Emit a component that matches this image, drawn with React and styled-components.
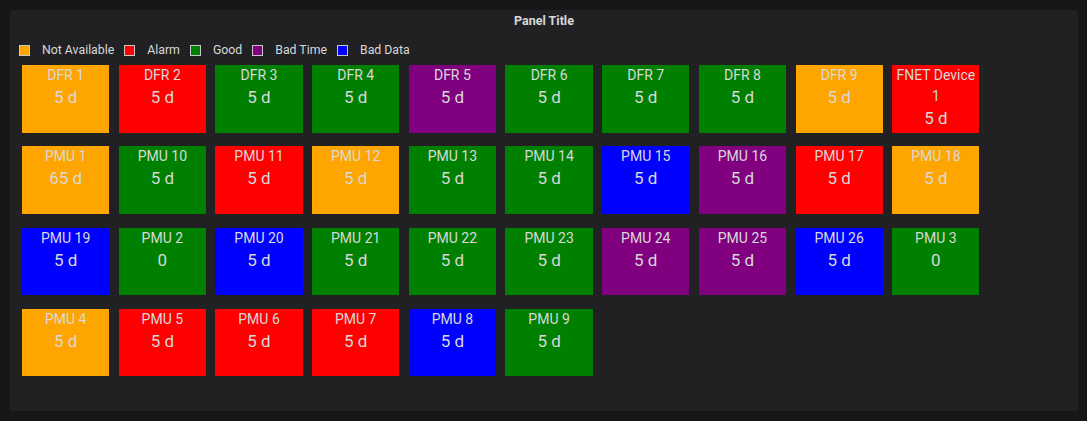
import React from 'react'
import styled, { createGlobalStyle } from 'styled-components'

const COLORS = {
    na: '#ffa500',
    alarm: '#ff0000',
    good: '#008000',
    badTime: '#800080',
    badData: '#0000ff',
}

const legend = [
    { key: 'na', label: 'Not Available' },
    { key: 'alarm', label: 'Alarm' },
    { key: 'good', label: 'Good' },
    { key: 'badTime', label: 'Bad Time' },
    { key: 'badData', label: 'Bad Data' },
]

// device name, status, uptime
const devices = [
    ['DFR 1', 'na', '5 d'],
    ['DFR 2', 'alarm', '5 d'],
    ['DFR 3', 'good', '5 d'],
    ['DFR 4', 'good', '5 d'],
    ['DFR 5', 'badTime', '5 d'],
    ['DFR 6', 'good', '5 d'],
    ['DFR 7', 'good', '5 d'],
    ['DFR 8', 'good', '5 d'],
    ['DFR 9', 'na', '5 d'],
    ['FNET Device 1', 'alarm', '5 d'],
    ['PMU 1', 'na', '65 d'],
    ['PMU 10', 'good', '5 d'],
    ['PMU 11', 'alarm', '5 d'],
    ['PMU 12', 'na', '5 d'],
    ['PMU 13', 'good', '5 d'],
    ['PMU 14', 'good', '5 d'],
    ['PMU 15', 'badData', '5 d'],
    ['PMU 16', 'badTime', '5 d'],
    ['PMU 17', 'alarm', '5 d'],
    ['PMU 18', 'na', '5 d'],
    ['PMU 19', 'badData', '5 d'],
    ['PMU 2', 'good', '0'],
    ['PMU 20', 'badData', '5 d'],
    ['PMU 21', 'good', '5 d'],
    ['PMU 22', 'good', '5 d'],
    ['PMU 23', 'good', '5 d'],
    ['PMU 24', 'badTime', '5 d'],
    ['PMU 25', 'badTime', '5 d'],
    ['PMU 26', 'badData', '5 d'],
    ['PMU 3', 'good', '0'],
    ['PMU 4', 'na', '5 d'],
    ['PMU 5', 'alarm', '5 d'],
    ['PMU 6', 'alarm', '5 d'],
    ['PMU 7', 'alarm', '5 d'],
    ['PMU 8', 'badData', '5 d'],
    ['PMU 9', 'good', '5 d'],
]

function App() {
    return (
        <>
            <GlobalStyle />
            <Panel>
                <Header>Panel Title</Header>
                <Legend>
                    {legend.map((item) => (
                        <LegendItem key={item.key}>
                            <Swatch $color={COLORS[item.key]} />
                            {item.label}
                        </LegendItem>
                    ))}
                </Legend>
                <Grid>
                    {devices.map(([name, status, value]) => (
                        <Tile key={name} $color={COLORS[status]}>
                            <Name>{name}</Name>
                            <Value>{value}</Value>
                        </Tile>
                    ))}
                </Grid>
            </Panel>
        </>
    )
}

const GlobalStyle = createGlobalStyle`
    body {
        margin: 0;
        padding: 10px;
        background: #161719;
        font-family: Roboto, "Liberation Sans", sans-serif;
        color: #d8d9da;
    }
`

const Panel = styled.div`
    width: 1068px;
    height: 401px;
    box-sizing: border-box;
    background: #212124;
    border-radius: 2px;
`

const Header = styled.div`
    height: 22px;
    line-height: 22px;
    text-align: center;
    font-size: 12.5px;
    font-weight: 700;
    color: #d8d9da;
`

const Legend = styled.div`
    display: flex;
    align-items: center;
    gap: 10px;
    margin-top: 10px;
    padding-left: 9px;
    height: 16px;
`

const LegendItem = styled.div`
    display: flex;
    align-items: center;
    gap: 12px;
    font-size: 12.3px;
`

const Swatch = styled.span`
    width: 9px;
    height: 9px;
    background: ${(p) => p.$color};
    border: 1px solid #c7c7c7;
`

const Grid = styled.div`
    display: grid;
    grid-template-columns: repeat(10, 87.3px);
    grid-auto-rows: 67.5px;
    column-gap: 9.4px;
    row-gap: 13.8px;
    margin-top: 7px;
    padding-left: 12px;
`

const Tile = styled.div`
    background: ${(p) => p.$color};
    text-align: center;
    color: #d8d9da;
    overflow: hidden;
`

const Name = styled.div`
    font-size: 14px;
    line-height: 21px;
`

const Value = styled.div`
    font-size: 17px;
    line-height: 22px;
`

export default App
